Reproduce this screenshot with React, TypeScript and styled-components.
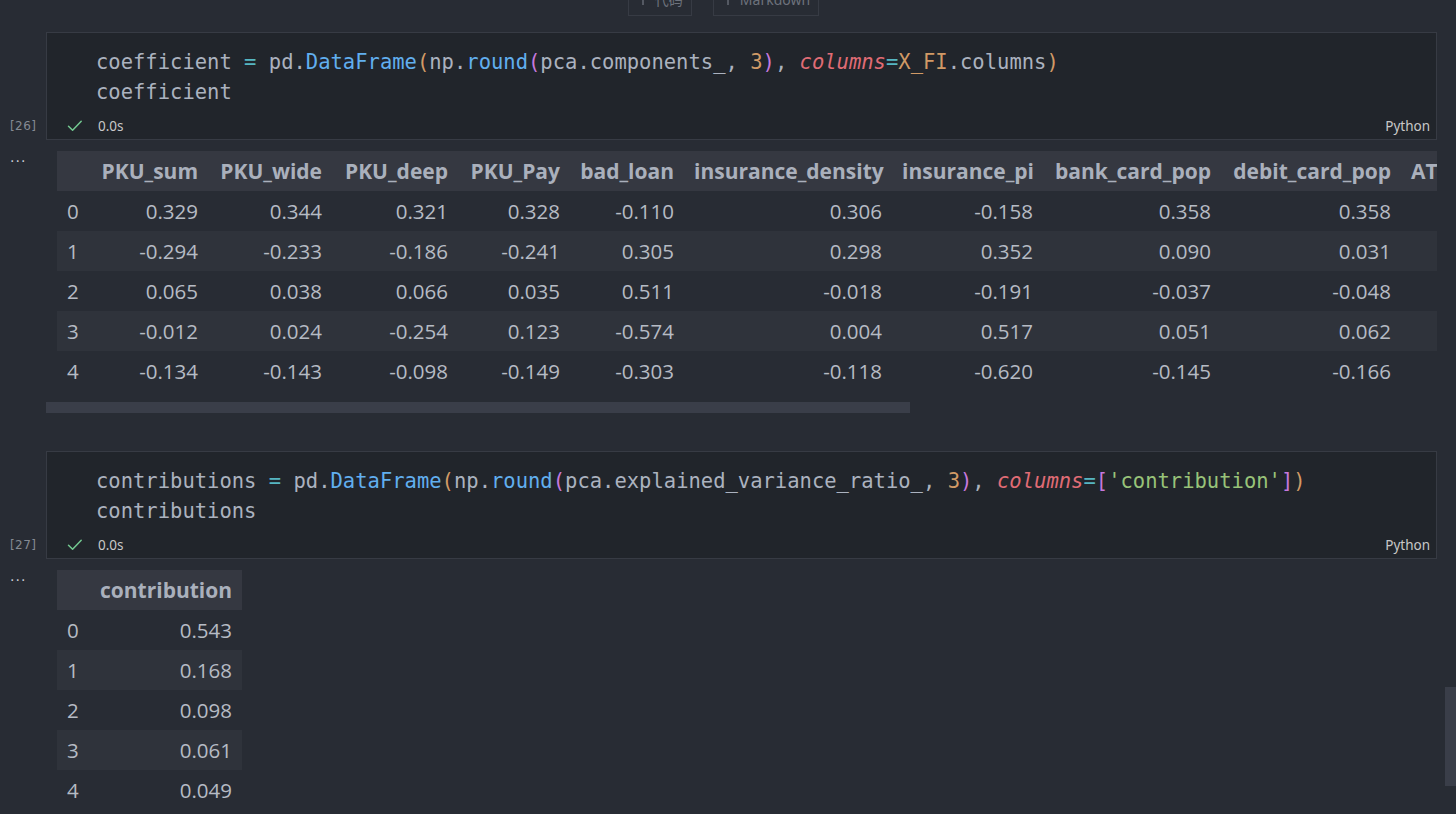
import React from "react";
import styled, { createGlobalStyle } from "styled-components";

const GlobalStyle = createGlobalStyle`
  html, body { margin: 0; padding: 0; background: #282c34; overflow: hidden; }
  * { box-sizing: border-box; }
`;

const C = {
  text: "#abb2bf",
  blue: "#61afef",
  cyan: "#56b6c2",
  orange: "#d19a66",
  purple: "#c678dd",
  red: "#e06c75",
  green: "#98c379",
};

const Page = styled.div`
  position: relative;
  width: 1456px;
  height: 814px;
  overflow: hidden;
  background: #282c34;
  display: flex;
  flex-direction: column;
`;

const Toolbar = styled.div`
  display: flex;
  justify-content: center;
  gap: 21px;
  margin-top: -10px;
  height: 26px;
  padding-right: 9px;
`;

const ToolButton = styled.div`
  height: 26px;
  border: 1px solid #373b44;
  color: #6d727c;
  font-family: "Noto Sans", "Noto Sans CJK SC", sans-serif;
  font-size: 14px;
  line-height: 18px;
  padding: 0 8px;
  display: flex;
  align-items: flex-start;
  gap: 6px;
  white-space: nowrap;
`;

const Row = styled.div<{ $mt: number }>`
  display: grid;
  grid-template-columns: 46px 1fr;
  padding-right: 19px;
  margin-top: ${(p) => p.$mt}px;
`;

const Gutter = styled.div<{ $end?: boolean }>`
  display: flex;
  flex-direction: column;
  justify-content: ${(p) => (p.$end ? "flex-end" : "flex-start")};
  padding-left: 10px;
`;

const ExecCount = styled.div`
  font-family: "DejaVu Sans", sans-serif;
  font-size: 12px;
  line-height: 20px;
  color: #858a93;
  padding-bottom: 4px;
  letter-spacing: 0.4px;
`;

const Dots = styled.div`
  font-family: "DejaVu Sans", sans-serif;
  font-size: 14px;
  line-height: 14px;
  color: #c8ccd4;
  letter-spacing: 1px;
`;

const DotsWrap = styled.div`
  padding-top: 10px;
`;

const CodeBox = styled.div`
  border: 1px solid #373b44;
  background: #21252b;
  padding: 14px 0 3px 0;
`;

const Code = styled.div`
  padding-left: 49px;
  font-family: "DejaVu Sans Mono", monospace;
  font-size: 20.5px;
  line-height: 30px;
  color: ${C.text};
  white-space: pre;
`;

const Tok = styled.span<{ $c: string; $i?: boolean }>`
  color: ${(p) => p.$c};
  font-style: ${(p) => (p.$i ? "italic" : "normal")};
`;

const Status = styled.div`
  display: flex;
  align-items: center;
  height: 20px;
  margin-top: 9px;
  padding: 0 6px 0 20px;
  font-family: "Noto Sans", sans-serif;
  font-size: 13.5px;
  color: #c8c8c8;
`;

const Duration = styled.span`
  margin-left: 15px;
`;

const Lang = styled.span`
  margin-left: auto;
`;

const OutputBody = styled.div`
  margin-top: 11px;
  min-width: 0;
`;

const Viewport = styled.div`
  padding-left: 11px;
  overflow: hidden;
`;

const Table = styled.table<{ $w: number }>`
  border-collapse: collapse;
  table-layout: fixed;
  width: ${(p) => p.$w}px;
  font-family: "Open Sans", "Noto Sans", sans-serif;
  font-size: 20.5px;
  color: #b6bbc4;
`;

const Th = styled.th<{ $w: number }>`
  width: ${(p) => p.$w}px;
  height: 40px;
  padding: 0 10px;
  text-align: right;
  font-weight: 700;
  font-size: 21px;
  color: #aab0bc;
  white-space: nowrap;
  overflow: hidden;
`;

const HeadRow = styled.tr`
  background: #353841;
`;

const BodyRow = styled.tr<{ $odd: boolean }>`
  background: ${(p) => (p.$odd ? "#2f333b" : "transparent")};
`;

const IndexCell = styled.td`
  height: 40px;
  padding: 0 10px;
  text-align: left;
  white-space: nowrap;
`;

const Td = styled.td`
  height: 40px;
  padding: 0 10px;
  text-align: right;
  white-space: nowrap;
  overflow: hidden;
`;

const HScroll = styled.div<{ $w: number }>`
  margin-top: 11px;
  width: ${(p) => p.$w}px;
  height: 11px;
  background: #3a3e49;
`;

const VScroll = styled.div`
  position: absolute;
  right: 0;
  top: 687px;
  width: 11px;
  height: 99px;
  background: #3a3e49;
`;

const CheckIcon = () => (
  <svg width="16" height="16" viewBox="0 0 16 16" fill="none">
    <path d="M1.5 8.2 L5.6 12.3 L14.2 3.2" stroke="#73c991" strokeWidth="1.5" strokeLinecap="round" strokeLinejoin="round" />
  </svg>
);

const PlusSvg = styled.svg`
  margin-top: 2px;
`;

const Plus = () => (
  <PlusSvg width="12" height="12" viewBox="0 0 12 12">
    <path d="M6 0 V12 M0 6 H12" stroke="#6d727c" strokeWidth="1.3" />
  </PlusSvg>
);

type TokT = [string, string?, boolean?];

const line1: TokT[] = [
  ["coefficient "],
  ["=", C.cyan],
  [" pd."],
  ["DataFrame", C.blue],
  ["(", C.orange],
  ["np."],
  ["round", C.blue],
  ["(", C.purple],
  ["pca.components_, "],
  ["3", C.orange],
  [")", C.purple],
  [", "],
  ["columns", C.red, true],
  ["=", C.cyan],
  ["X_FI", C.orange],
  [".columns"],
  [")", C.orange],
];

const line2: TokT[] = [
  ["contributions "],
  ["=", C.cyan],
  [" pd."],
  ["DataFrame", C.blue],
  ["(", C.orange],
  ["np."],
  ["round", C.blue],
  ["(", C.purple],
  ["pca.explained_variance_ratio_, "],
  ["3", C.orange],
  [")", C.purple],
  [", "],
  ["columns", C.red, true],
  ["=", C.cyan],
  ["[", C.purple],
  ["'contribution'", C.green],
  ["]", C.purple],
  [")", C.orange],
];

const CodeLine = ({ toks }: { toks: TokT[] }) => (
  <div>
    {toks.map(([t, c, i], k) => (
      <Tok key={k} $c={c || C.text} $i={i}>
        {t}
      </Tok>
    ))}
  </div>
);

const CodeCell = ({ count, lines, mt }: { count: number; lines: TokT[][]; mt: number }) => (
  <Row $mt={mt}>
    <Gutter $end>
      <ExecCount>[{count}]</ExecCount>
    </Gutter>
    <CodeBox>
      <Code>
        {lines.map((l, i) => (
          <CodeLine key={i} toks={l} />
        ))}
      </Code>
      <Status>
        <CheckIcon />
        <Duration>0.0s</Duration>
        <Lang>Python</Lang>
      </Status>
    </CodeBox>
  </Row>
);

type Col = { name: string; w: number };

const DataTable = ({ cols, rows }: { cols: Col[]; rows: string[][] }) => {
  const total = 33 + cols.reduce((s, c) => s + c.w, 0);
  return (
    <Table $w={total}>
      <thead>
        <HeadRow>
          <Th $w={33}></Th>
          {cols.map((c) => (
            <Th key={c.name} $w={c.w}>
              {c.name}
            </Th>
          ))}
        </HeadRow>
      </thead>
      <tbody>
        {rows.map((r, i) => (
          <BodyRow key={i} $odd={i % 2 === 1}>
            <IndexCell>{i}</IndexCell>
            {r.map((v, j) => (
              <Td key={j}>{v}</Td>
            ))}
          </BodyRow>
        ))}
      </tbody>
    </Table>
  );
};

const cols1: Col[] = [
  { name: "PKU_sum", w: 118 },
  { name: "PKU_wide", w: 124 },
  { name: "PKU_deep", w: 126 },
  { name: "PKU_Pay", w: 112 },
  { name: "bad_loan", w: 114 },
  { name: "insurance_density", w: 208 },
  { name: "insurance_pi", w: 151 },
  { name: "bank_card_pop", w: 178 },
  { name: "debit_card_pop", w: 180 },
  { name: "ATM_pop", w: 110 },
];

const rows1: string[][] = [
  ["0.329", "0.344", "0.321", "0.328", "-0.110", "0.306", "-0.158", "0.358", "0.358", "0.311"],
  ["-0.294", "-0.233", "-0.186", "-0.241", "0.305", "0.298", "0.352", "0.090", "0.031", "0.204"],
  ["0.065", "0.038", "0.066", "0.035", "0.511", "-0.018", "-0.191", "-0.037", "-0.048", "0.112"],
  ["-0.012", "0.024", "-0.254", "0.123", "-0.574", "0.004", "0.517", "0.051", "0.062", "0.087"],
  ["-0.134", "-0.143", "-0.098", "-0.149", "-0.303", "-0.118", "-0.620", "-0.145", "-0.166", "0.045"],
];

const cols2: Col[] = [{ name: "contribution", w: 152 }];
const rows2: string[][] = [["0.543"], ["0.168"], ["0.098"], ["0.061"], ["0.049"]];

const Output = ({ children, scroll }: { children: React.ReactNode; scroll?: number }) => (
  <Row $mt={0}>
    <Gutter>
      <DotsWrap>
        <Dots>...</Dots>
      </DotsWrap>
    </Gutter>
    <OutputBody>
      <Viewport>{children}</Viewport>
      {scroll ? <HScroll $w={scroll} /> : null}
    </OutputBody>
  </Row>
);

export default function App() {
  return (
    <Page>
      <GlobalStyle />
      <Toolbar>
        <ToolButton>
          <Plus />
          代码
        </ToolButton>
        <ToolButton>
          <Plus />
          Markdown
        </ToolButton>
      </Toolbar>
      <CodeCell count={26} lines={[line1, [["coefficient"]]]} mt={16} />
      <Output scroll={864}>
        <DataTable cols={cols1} rows={rows1} />
      </Output>
      <CodeCell count={27} lines={[line2, [["contributions"]]]} mt={38} />
      <Output>
        <DataTable cols={cols2} rows={rows2} />
      </Output>
      <VScroll />
    </Page>
  );
}
